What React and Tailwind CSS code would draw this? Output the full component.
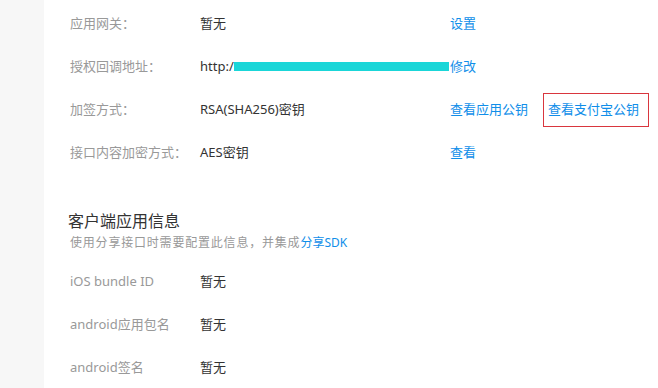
import React from "react";

const font = { fontFamily: '"Noto Sans", "Noto Sans CJK SC", sans-serif' };

const Row = ({ label, children, links }) => (
  <div className="flex items-center h-[43px] text-[13px]">
    <div className="w-[130px] text-[#999]">{label}</div>
    <div className="w-[250px] text-[#333] flex items-center">{children}</div>
    {links}
  </div>
);

const InfoRow = ({ label, value }) => (
  <div className="flex items-center h-[43px] text-[13px]">
    <div className="w-[130px] text-[#999]">{label}</div>
    <div className="text-[#333]">{value}</div>
  </div>
);

export default function App() {
  return (
    <div className="flex w-[658px] h-[388px] overflow-hidden bg-white" style={font}>
      <div className="w-[44px] shrink-0 bg-[#f7f7f7]"></div>
      <div className="flex-1 pl-[26px] pt-[2px]">
        <Row label="应用网关：" links={<a className="text-[#108ee9]">设置</a>}>
          暂无
        </Row>
        <Row label="授权回调地址：" links={<a className="text-[#108ee9]">修改</a>}>
          <span>http:/</span>
          <span className="inline-block w-[215px] h-[9px] bg-[#1ad6d8]"></span>
        </Row>
        <Row
          label="加签方式："
          links={
            <div className="flex items-center">
              <a className="text-[#108ee9]">查看应用公钥</a>
              <a className="ml-[15px] h-[34px] w-[106px] border border-[#d9363e] pl-[4px] flex items-center text-[#108ee9]">
                查看支付宝公钥
              </a>
            </div>
          }
        >
          RSA(SHA256)密钥
        </Row>
        <Row label="接口内容加密方式：" links={<a className="text-[#108ee9]">查看</a>}>
          AES密钥
        </Row>

        <div className="mt-[36px]">
          <div className="text-[16px] leading-[22px] text-[#333] -ml-[2px]">客户端应用信息</div>
          <div className="mt-[2px] text-[12px] leading-[18px] tracking-[0.8px] text-[#999]">
            使用分享接口时需要配置此信息，并集成<span className="text-[#108ee9] tracking-normal">分享SDK</span>
          </div>
        </div>

        <div className="mt-[8px]">
          <InfoRow label="iOS bundle ID" value="暂无" />
          <InfoRow label="android应用包名" value="暂无" />
          <InfoRow label="android签名" value="暂无" />
        </div>
      </div>
    </div>
  );
}
